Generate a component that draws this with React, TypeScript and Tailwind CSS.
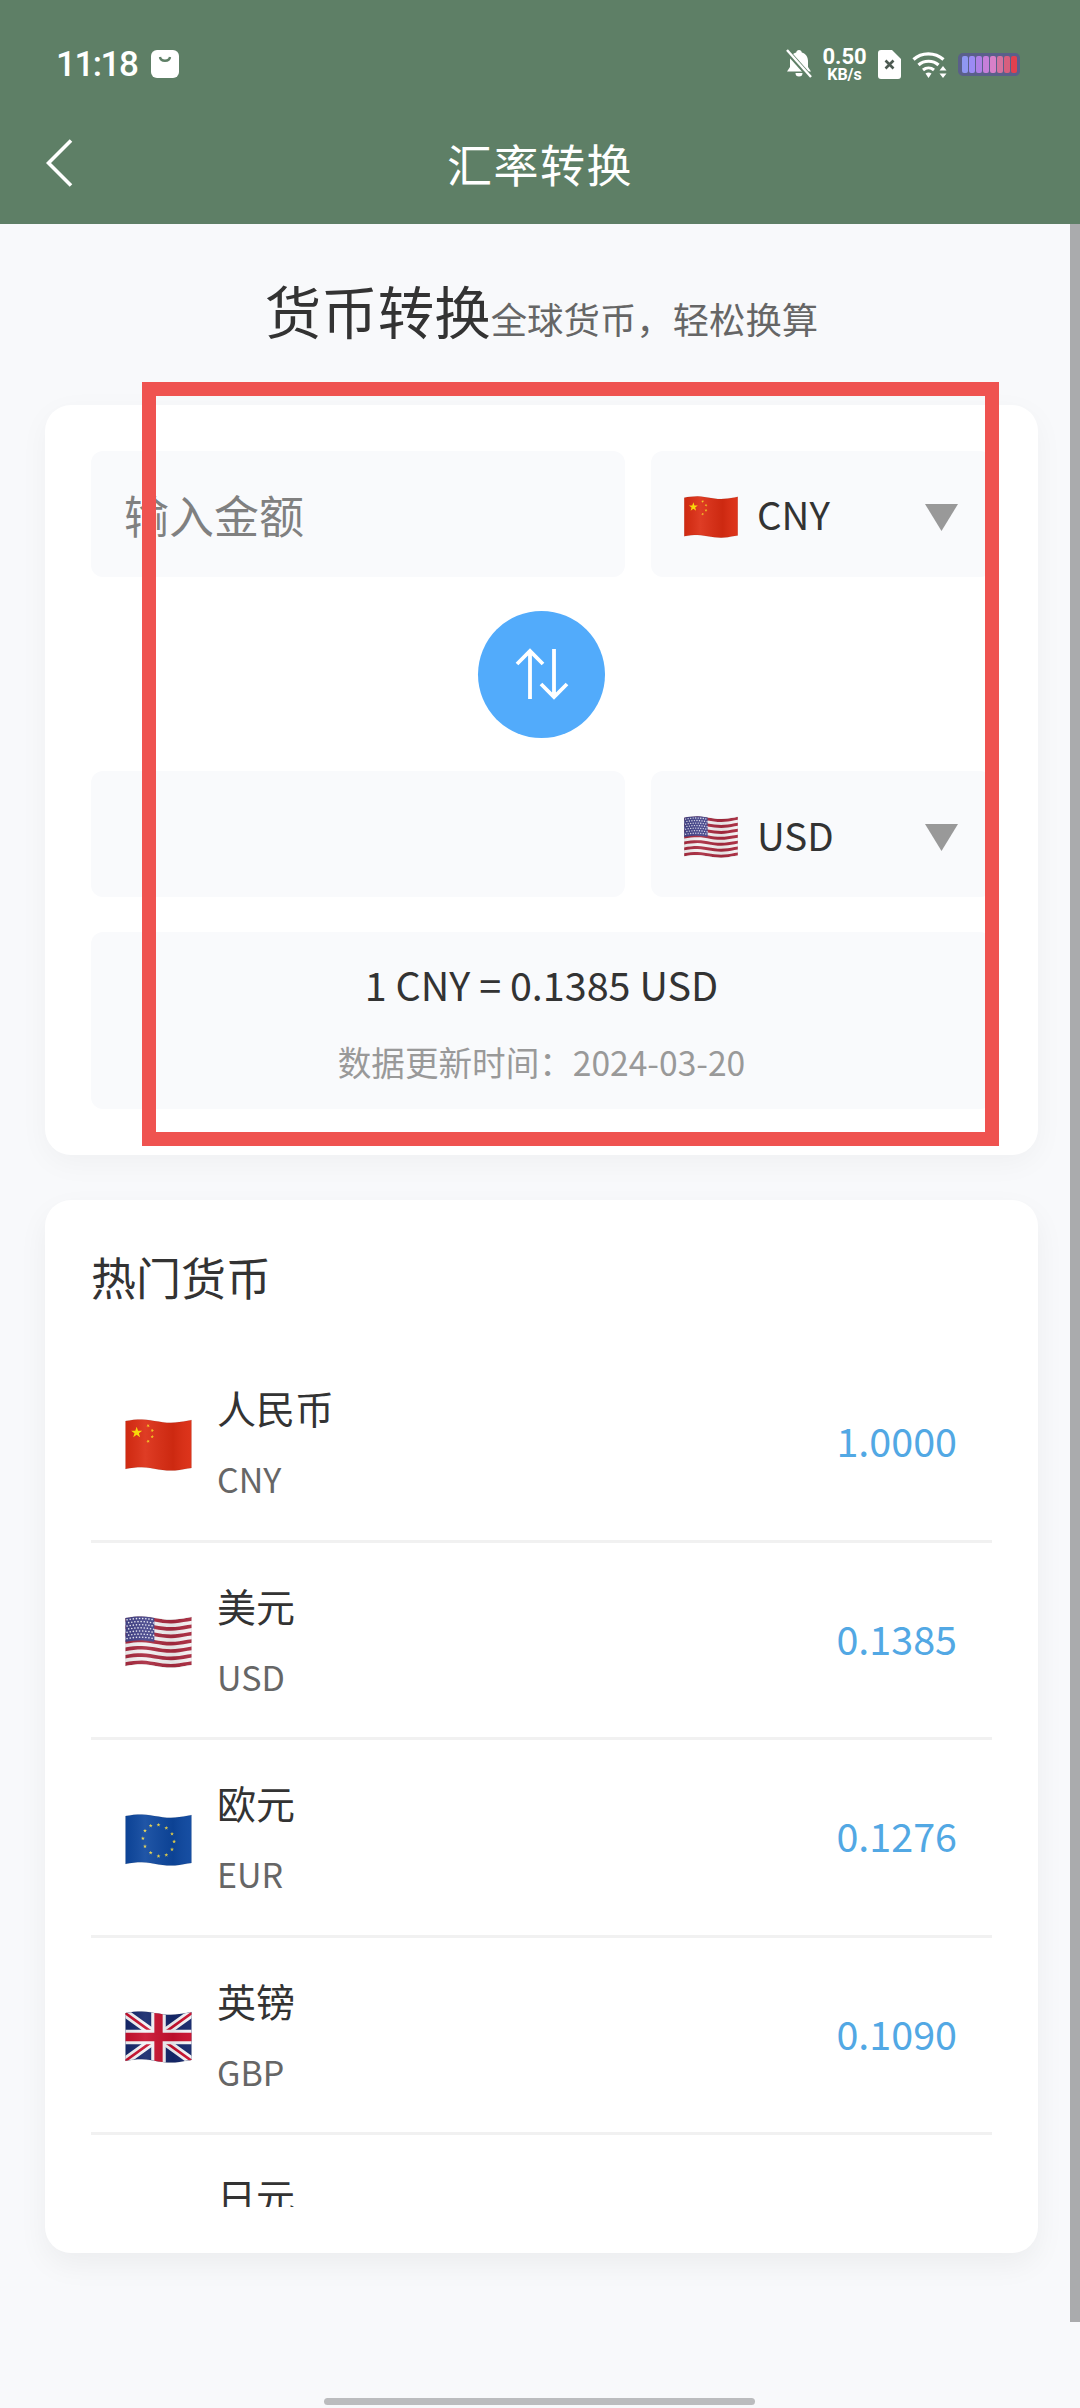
import { useId } from "react";

const W = 64;
const H = 46;

function wave(x: number) {
  return -1.6 * Math.sin((2 * Math.PI * x) / 58);
}

// one horizontal band that follows the flag's wave
function band(y1: number, y2: number, x1 = 0, x2 = W) {
  const top: string[] = [];
  const bottom: string[] = [];
  for (let x = x1; x <= x2; x += 4) {
    top.push(`${x},${(y1 + wave(x)).toFixed(2)}`);
    bottom.unshift(`${x},${(y2 + wave(x)).toFixed(2)}`);
  }
  return `M${top.join(" L")} L${bottom.join(" L")} Z`;
}

function star(cx: number, cy: number, r: number, rot = -Math.PI / 2) {
  const pts: string[] = [];
  for (let i = 0; i < 10; i++) {
    const rad = i % 2 === 0 ? r : r * 0.4;
    const a = rot + (i * Math.PI) / 5;
    pts.push(`${(cx + rad * Math.cos(a)).toFixed(2)},${(cy + rad * Math.sin(a)).toFixed(2)}`);
  }
  return pts.join(" ");
}

type Code = "CNY" | "USD" | "EUR" | "GBP";

function FlagBody({ code }: { code: Code }) {
  if (code === "CNY") {
    return (
      <>
        <rect width={W} height={H + 4} y={-2} fill="#DC2C12" />
        <polygon points={star(11, 11, 5.6)} fill="#FFDE00" />
        <polygon points={star(22, 4.5, 1.8, 0.4)} fill="#F5C518" />
        <polygon points={star(26, 9, 1.8, 0.1)} fill="#F5C518" />
        <polygon points={star(26, 15, 1.8, -0.2)} fill="#F5C518" />
        <polygon points={star(22, 19.5, 1.8, 0.5)} fill="#F5C518" />
      </>
    );
  }
  if (code === "USD") {
    const stripes = Array.from({ length: 13 }, (_, i) => i);
    const dots: [number, number][] = [];
    for (let r = 0; r < 7; r++) {
      for (let c = 0; c < 9; c++) dots.push([1.8 + c * 3 + (r % 2) * 1.5, 2 + r * 3]);
    }
    return (
      <>
        <rect width={W} height={H + 4} y={-2} fill="#F4F1F2" />
        {stripes
          .filter((i) => i % 2 === 0)
          .map((i) => (
            <path key={i} d={band((i * H) / 13, ((i + 1) * H) / 13)} fill="#A92A3F" />
          ))}
        <path d={band(-2, 23, 0, 28)} fill="#44448A" />
        {dots.map(([x, y], i) => (
          <circle key={i} cx={x} cy={y + wave(x)} r={0.8} fill="#E9E9F5" />
        ))}
      </>
    );
  }
  if (code === "EUR") {
    const ring = Array.from({ length: 12 }, (_, i) => (i * Math.PI) / 6);
    return (
      <>
        <rect width={W} height={H + 4} y={-2} fill="#0D479F" />
        {ring.map((a, i) => {
          const x = 32 + 15 * Math.cos(a);
          const y = 23 + 15 * Math.sin(a);
          return <polygon key={i} points={star(x, y + wave(x), 2)} fill="#E8D44D" />;
        })}
      </>
    );
  }
  return (
    <>
      <rect width={W} height={H + 4} y={-2} fill="#14276B" />
      <path d="M0 0L64 46M64 0L0 46" stroke="#F3F3F6" strokeWidth={8} />
      <path d="M0 0L64 46M64 0L0 46" stroke="#C8102E" strokeWidth={2.6} />
      <path d="M32 -2V48M0 23H64" stroke="#F3F3F6" strokeWidth={14} />
      <path d="M32 -2V48M0 23H64" stroke="#C8102E" strokeWidth={8} />
    </>
  );
}

function Flag({ code, className }: { code: Code; className: string }) {
  const id = useId();
  return (
    <svg viewBox={`0 -2 ${W} ${H + 4}`} className={className}>
      <defs>
        <clipPath id={id}>
          <path d={band(0, H)} />
        </clipPath>
        <linearGradient id={`${id}s`}>
          <stop offset="0" stopColor="#000" stopOpacity={0.06} />
          <stop offset="0.3" stopColor="#fff" stopOpacity={0.08} />
          <stop offset="0.72" stopColor="#000" stopOpacity={0.07} />
          <stop offset="1" stopColor="#fff" stopOpacity={0.04} />
        </linearGradient>
      </defs>
      <g clipPath={`url(#${id})`}>
        <FlagBody code={code} />
        <rect width={W} height={H + 4} y={-2} fill={`url(#${id}s)`} />
      </g>
      <path d={band(0, H)} fill="none" stroke="#000" strokeOpacity={0.14} strokeWidth={0.5} />
    </svg>
  );
}

function StatusIcons() {
  return (
    <div className="flex items-center">
      <svg viewBox="0 0 26 30" className="h-[30px] w-[26px]">
        <path d="M13 1c1.6 0 2.6 1 2.8 2.4C20 4.600 22 8 22 12v6l3 4.500H1L4 18v-6c0-4 2-7.400 6.200-8.600C10.400 2 11.400 1 13 1z" fill="#fff" />
        <path d="M9.500 24h7a3.500 3.500 0 0 1-7 0z" fill="#fff" />
        <path d="M1 2l24 27" stroke="#5E7F66" strokeWidth={5} />
        <path d="M1 1l24 27" stroke="#fff" strokeWidth={2.400} />
      </svg>
      <div className="ml-[10px] flex w-[45px] flex-col items-center font-['Roboto',sans-serif] font-bold text-white">
        <span className="text-[22px] leading-[21px]">0.50</span>
        <span className="mt-[-1px] text-[16px] leading-[17px]">KB/s</span>
      </div>
      <svg viewBox="0 0 23 29" className="ml-[11px] h-[29px] w-[23px]">
        <path d="M3 0h11l9 9v17a3 3 0 0 1-3 3H3a3 3 0 0 1-3-3V3a3 3 0 0 1 3-3z" fill="#fff" />
        <path d="M7.500 10.500l8 8M15.500 10.500l-8 8" stroke="#4D5A52" strokeWidth={2.600} />
      </svg>
      <svg viewBox="0 0 35 27" className="ml-[11px] h-[27px] w-[35px]" fill="none">
        <path d="M1.500 8.500C9.500 1 23 1 31.500 8.500" stroke="#fff" strokeWidth={3.200} />
        <path d="M6.500 14C12 9 21 9 26.500 14" stroke="#fff" strokeWidth={3.200} />
        <path d="M11 19c3.300-2.800 7.700-2.800 11 0" stroke="#fff" strokeWidth={3} />
        <path d="M13.500 22.500c2-1.500 4-1.500 6 0L16.500 27z" fill="#fff" />
        <path d="M31 15l3.500 4.500h-7zM31 27l-3.500-4.500h7z" fill="#fff" />
      </svg>
      <div className="ml-[11px] flex h-[23px] w-[62px] items-center justify-center gap-[1px] rounded-[5px] bg-[#5A5F8A]">
        <span className="h-[17px] w-[6px] rounded-[2px] bg-[#8F97F2]" />
        <span className="h-[17px] w-[6px] rounded-[2px] bg-[#9C8BF5]" />
        <span className="h-[17px] w-[6px] rounded-[2px] bg-[#AF80E6]" />
        <span className="h-[17px] w-[6px] rounded-[2px] bg-[#C67FD9]" />
        <span className="h-[17px] w-[6px] rounded-[2px] bg-[#D880C8]" />
        <span className="h-[17px] w-[6px] rounded-[2px] bg-[#D4739F]" />
        <span className="h-[17px] w-[6px] rounded-[2px] bg-[#D75F7E]" />
        <span className="h-[17px] w-[6px] rounded-[2px] bg-[#E2404F]" />
      </div>
    </div>
  );
}

function CurrencySelect({ code }: { code: Code }) {
  return (
    <div className="flex h-[126px] w-[341px] items-center rounded-[12px] bg-[#F9FAFC] pl-[33px] pr-[34px]">
      <Flag code={code} className="mt-[6px] h-[42px] w-[54px]" />
      <span className="ml-[19px] text-[38.500px] text-[#333]">{code}</span>
      <svg viewBox="0 0 33 27" className="ml-auto mt-[6px] h-[27px] w-[33px]">
        <path d="M0 0H33L16.500 27Z" fill="#999" />
      </svg>
    </div>
  );
}

const rates: { name: string; code: Code; rate: string }[] = [
  { name: "人民币", code: "CNY", rate: "1.0000" },
  { name: "美元", code: "USD", rate: "0.1385" },
  { name: "欧元", code: "EUR", rate: "0.1276" },
  { name: "英镑", code: "GBP", rate: "0.1090" },
];

export default function App() {
  return (
    <div className="relative h-[2408px] w-[1080px] overflow-hidden bg-[#F8F9FB] font-['Noto_Sans_CJK_SC','Noto_Sans',sans-serif]">
      <header className="h-[224px] bg-[#5E7F66] text-white">
        <div className="flex h-[128px] items-center justify-between pl-[56px] pr-[60px]">
          <div className="flex items-center">
            <span className="font-['Roboto',sans-serif] text-[35px] font-medium leading-none tracking-[-1.500px]">11:18</span>
            <svg viewBox="0 0 28 28" className="ml-[14px] h-[28px] w-[28px]">
              <rect width={28} height={28} rx={6} fill="#fff" />
              <path d="M9 7c.6 5 9.400 5 10 0" fill="none" stroke="#5E7F66" strokeWidth={2.400} />
            </svg>
          </div>
          <StatusIcons />
        </div>
        <div className="relative flex h-[70px] items-center justify-center">
          <svg viewBox="0 0 27 48" className="absolute left-[46px] top-[11px] h-[48px] w-[27px]" fill="none">
            <path d="M25 1.500L2.500 24L25 46.500" stroke="#fff" strokeWidth={3.600} />
          </svg>
          <h1 className="text-[45px] font-normal leading-none tracking-[1.500px]">汇率转换</h1>
        </div>
      </header>

      <main className="pl-[45px] pr-[42px]">
        <div className="flex h-[181px] items-baseline justify-center pt-[47px] text-[#333]">
          <h2 className="text-[56.500px] leading-[76px]">货币转换</h2>
          <p className="text-[36.400px] leading-[76px] text-[#666]">全球货币，轻松换算</p>
        </div>

        <section className="flex h-[750px] flex-col rounded-[26px] bg-white p-[46px] shadow-[0_8px_30px_rgba(0,0,0,0.04)]">
          <div className="flex justify-between">
            <input
              placeholder="输入金额"
              className="h-[126px] w-[534px] rounded-[12px] bg-[#F9FAFC] px-[33px] text-[45px] text-[#333] outline-none placeholder:text-[#808080]"
            />
            <CurrencySelect code="CNY" />
          </div>
          <div className="flex h-[195px] items-center justify-center">
            <button className="flex h-[127px] w-[127px] items-center justify-center rounded-full bg-[#52ABFB]">
              <svg viewBox="0 0 54 52" className="h-[52px] w-[54px]" fill="none" stroke="#fff" strokeWidth={3.800}>
                <path d="M15 51V3M2 16L15 3L28 16" />
                <path d="M39 1V49M26 36L39 49L52 36" />
              </svg>
            </button>
          </div>
          <div className="flex justify-between">
            <div className="h-[126px] w-[534px] rounded-[12px] bg-[#F9FAFC]" />
            <CurrencySelect code="USD" />
          </div>
          <div className="mt-[35px] flex h-[177px] flex-col items-center rounded-[12px] bg-[#F9FAFC] pt-[24px]">
            <p className="text-[39.500px] leading-[56px] text-[#333]">1 CNY = 0.1385 USD</p>
            <p className="mt-[26px] text-[33.600px] leading-[48px] text-[#999]">数据更新时间：2024-03-20</p>
          </div>
        </section>

        <section className="mt-[45px] flex h-[1053px] flex-col rounded-[26px] bg-white p-[46px] shadow-[0_12px_30px_rgba(0,0,0,0.05)]">
          <h3 className="h-[99px] text-[45px] font-normal leading-[61px] text-[#333]">热门货币</h3>
          <div className="min-h-0 flex-1 overflow-hidden">
            {rates.map((r) => (
              <div key={r.code} className="flex h-[197.500px] items-center border-b-[3px] border-[#F1F1F1] pb-[5px] pl-[34px] pr-[35px]">
                <Flag code={r.code} className="mt-[10px] h-[52px] w-[67px]" />
                <div className="ml-[25px]">
                  <p className="text-[39px] leading-[64px] text-[#333]">{r.name}</p>
                  <p className="mt-[15px] text-[34px] leading-[50px] text-[#666]">{r.code}</p>
                </div>
                <span className="ml-auto text-[39.500px] text-[#52A8E4]">{r.rate}</span>
              </div>
            ))}
            <div className="flex h-[197.500px] pl-[34px] pt-[28px]">
              <p className="ml-[92px] text-[39px] leading-[64px] text-[#333]">日元</p>
            </div>
          </div>
        </section>
      </main>

      {/* scroll bar, annotation frame and gesture bar sit over the page */}
      <div className="absolute right-0 top-[224px] h-[2098px] w-[10px] bg-[#AAABAD]" />
      <div className="pointer-events-none absolute left-[142px] top-[382px] h-[764px] w-[857px] border-[14px] border-[#EF5350]" />
      <div className="absolute bottom-[3px] left-[324px] h-[7px] w-[431px] rounded-full bg-[#BBBCBE]" />
    </div>
  );
}
